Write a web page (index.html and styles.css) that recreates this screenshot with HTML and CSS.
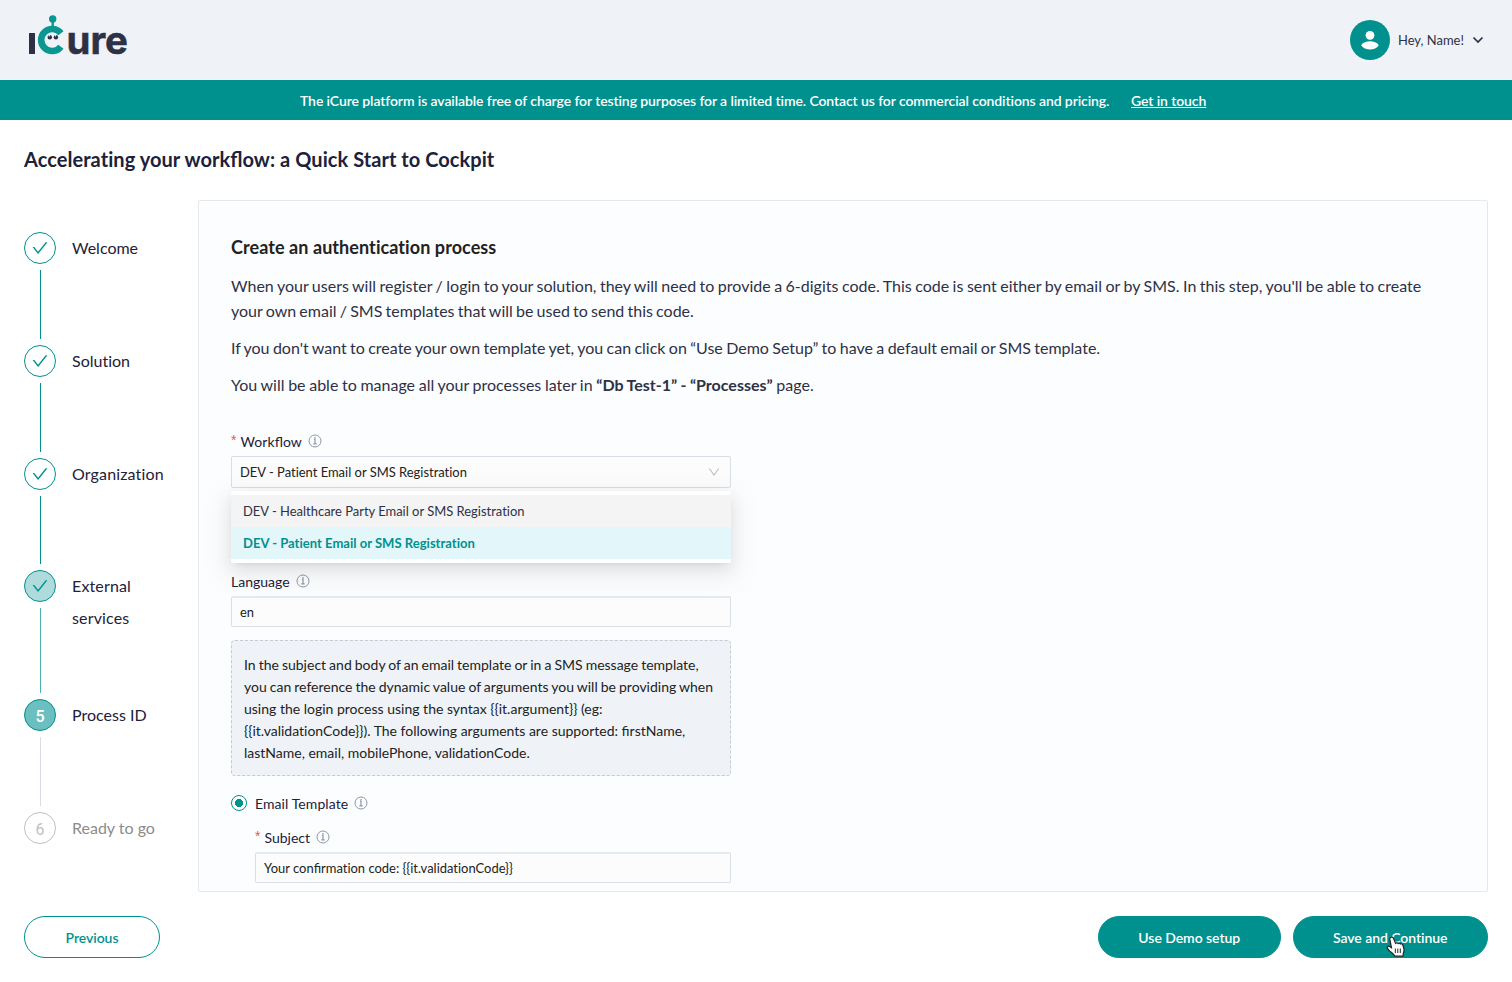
FILE: index.html
```html
<!DOCTYPE html>
<html lang="en">
<head>
<meta charset="utf-8">
<title>iCure Cockpit</title>
<link rel="stylesheet" href="styles.css">
</head>
<body>
<svg class="defs" width="0" height="0">
  <symbol id="check" viewBox="64 64 896 896"><path fill="currentColor" d="M912 190h-69.900c-9.800 0-19.100 4.500-25.100 12.200L404.700 724.500 207 474a32 32 0 0 0-25.100-12.200H112c-6.700 0-10.400 7.700-6.300 12.900l273.900 347c12.800 16.200 37.400 16.200 50.300 0l488.400-618.900c4.100-5.100.4-12.800-6.300-12.800z"/></symbol>
  <symbol id="info" viewBox="0 0 14 14"><circle cx="7" cy="7" r="6" fill="none" stroke="currentColor"/><path d="M7 3v1.200M6 5.200h1v4.500M5.300 9.900h3.400" fill="none" stroke="currentColor" stroke-width="1.200"/></symbol>
</svg>
<header class="header">
  <svg class="logo" width="104" height="44" viewBox="0 0 104 44">
    <rect x="3" y="18" width="6" height="21" fill="#2e3145"/>
    <path d="M34.900 18.300A11 11 0 1 0 34.900 31.700" fill="none" stroke="#0a9691" stroke-width="6.600"/>
    <circle cx="26.700" cy="3.900" r="3.700" fill="#0a9691"/>
    <path d="M26.700 5v9" stroke="#0a9691" stroke-width="2.400"/>
    <circle cx="23.800" cy="22.300" r="2.200" fill="#2e3145"/><circle cx="29.900" cy="22.300" r="2.200" fill="#2e3145"/>
    <circle cx="23.300" cy="20.800" r=".8" fill="#eff3f8"/><circle cx="29.400" cy="20.800" r=".8" fill="#eff3f8"/>
    <text class="logo-text" x="40.500" y="39" textLength="61.500" lengthAdjust="spacingAndGlyphs">ure</text>
  </svg>
  <div class="user">
    <span class="avatar"><svg width="20" height="20" viewBox="0 0 20 20" fill="#fff"><circle cx="10" cy="5.300" r="4.400"/><path d="M1.200 15.200C3 12.200 6.500 11.200 10 11.200s7 1 8.800 4C17 18.200 13.500 19.400 10 19.400s-7-1.200-8.800-4.200z"/></svg></span>
    <span class="hey"><span class="narrow">Hey, Name!</span></span>
    <svg class="chev" width="12" height="8" viewBox="0 0 12 8"><path d="M1.500 1.500 6 6l4.500-4.500" fill="none" stroke="#2e3145" stroke-width="1.700"/></svg>
  </div>
</header>
<div class="banner"><span class="banner-text">The iCure platform is available free of charge for testing purposes for a limited time. Contact us for commercial conditions and pricing.</span><a class="banner-link">Get in touch</a></div>
<h1 class="title">Accelerating your work<span class="lig">fl</span>ow: a Quick Start to Cockpit</h1>
<main class="main">
  <ol class="steps">
    <li class="step"><div class="rail"><span class="dot"><svg width="16" height="16"><use href="#check"/></svg></span><i class="line"></i></div><span class="name">Welcome</span></li>
    <li class="step"><div class="rail"><span class="dot"><svg width="16" height="16"><use href="#check"/></svg></span><i class="line"></i></div><span class="name">Solution</span></li>
    <li class="step third"><div class="rail"><span class="dot"><svg width="16" height="16"><use href="#check"/></svg></span><i class="line"></i></div><span class="name">Organization</span></li>
    <li class="step tall"><div class="rail"><span class="dot light"><svg width="16" height="16"><use href="#check"/></svg></span><i class="line soft"></i></div><span class="name">External<br>services</span></li>
    <li class="step"><div class="rail"><span class="dot active">5</span><i class="line gray"></i></div><span class="name">Process ID</span></li>
    <li class="step last"><div class="rail"><span class="dot wait">6</span></div><span class="name muted">Ready to go</span></li>
  </ol>
  <section class="panel">
    <h2 class="heading">Create an authentication process</h2>
    <div class="intro">
      <p>When your users will register / login to your solution, they will need to provide a 6-digits code. This code is sent either by email or by SMS. In this step, you'll be able to create<br><span class="tight">your own email / SMS templates that will be used to send this code.</span></p>
      <p class="mid">If you don't want to create your own template yet, you can click on “Use Demo Setup” to have a default email or SMS template.</p>
      <p class="loose">You will be able to manage all your processes later in <b>“Db Test-1” - “Processes”</b> page.</p>
    </div>
    <div class="form">
      <div class="label"><em class="req">*</em><span class="wide">Work<span class="lig">fl</span>ow</span><svg class="info" width="14" height="14"><use href="#info"/></svg></div>
      <div class="field select"><span class="narrow">DEV - Patient Email or SMS Registration</span>
        <svg width="12" height="12" viewBox="0 0 12 12"><path d="M1.300 2.500 6 9l4.700-6.500" fill="none" stroke="#bfbfbf" stroke-width="1.100"/></svg>
        <div class="menu">
          <div class="option hover"><span class="narrow">DEV - Healthcare Party Email or SMS Registration</span></div>
          <div class="option selected"><span class="narrow">DEV - Patient Email or SMS Registration</span></div>
        </div>
      </div>
      <div class="label language"><span>Language</span><svg class="info" width="14" height="14"><use href="#info"/></svg></div>
      <div class="field input"><span class="narrow">en</span></div>
      <div class="note"><span class="note-tight">In the subject and body of an email template or in a SMS message template,<br>you can reference the dynamic value of arguments you will be providing when</span><br>using the login process using the syntax {{it.argument}} (eg:<br>{{it.validationCode}}). The following arguments are supported: <span class="lig">fi</span>rstName,<br>lastName, email, mobilePhone, validationCode.</div>
      <div class="label email"><span class="radio"></span><span class="wide">Email Template</span><svg class="info" width="14" height="14"><use href="#info"/></svg></div>
      <div class="nested">
        <div class="label subject"><em class="req">*</em><span>Subject</span><svg class="info" width="14" height="14"><use href="#info"/></svg></div>
        <div class="field input"><span class="narrow">Your con<span class="lig">fi</span>rmation code: {{it.validationCode}}</span></div>
      </div>
    </div>
  </section>
</main>
<footer class="footer">
  <button class="btn outline">Previous</button>
  <div class="actions"><button class="btn demo">Use Demo setup</button><button class="btn save">Save and Continue</button></div>
</footer>
<svg class="cursor" width="20" height="22" viewBox="0 0 20 22"><path d="M5.200 1.200c1-.4 1.900.1 2.300 1.100l2 5c.7-.7 1.900-.7 2.500.2.700-.6 1.900-.5 2.400.4 1-.4 2 .1 2.400 1.100l1 3.300c.5 2 .2 3.500-.5 5l-.3 2.900H8.800c-.8-2-3.100-3.500-5-5.100-1.200-1-2-2.200-2.600-3.200-.4-1.300 1-2.100 2.300-1.400l2 1.200L3.900 3.600c-.4-1 .1-2 1.300-2.400z" fill="#fff" stroke="#222" stroke-width="1.200"/><path d="M9.300 12.500v4.500M11.800 12.500v4.500M14.300 12.500v4.500" stroke="#222" stroke-width="1"/></svg>
</body>
</html>
```
FILE: styles.css
```css
* { box-sizing: border-box; }
body { margin: 0; height: 982px; overflow: hidden; background: #fff; color: #1d2139; font-family: Lato, "Liberation Sans", sans-serif; font-size: 14px; position: relative; font-variant-ligatures: no-common-ligatures; }
.defs { position: absolute; }
.lig { font-variant-ligatures: common-ligatures; letter-spacing: 0; }
.narrow { display: inline-block; transform: scaleX(.925); transform-origin: left center; }
.header { height: 80px; background: #eff3f8; display: flex; justify-content: space-between; align-items: flex-start; padding: 15px 28px 0 26px; }
.logo { display: block; overflow: visible; }
.logo-text { font: 700 38px Inter, sans-serif; fill: #2e3145; stroke: #2e3145; stroke-width: .5px; }
.user { display: flex; align-items: center; margin-top: 5px; height: 40px; color: #2e3145; }
.avatar { width: 40px; height: 40px; border-radius: 50%; background: #00918f; display: grid; place-items: center; margin-right: 8px; }
.hey { width: 66px; white-space: nowrap; padding-bottom: 1px; }
.chev { margin-left: 8px; }
.banner { height: 40px; background: #00918f; color: #fff; display: flex; padding-left: 300px; line-height: 42px; font-weight: 600; white-space: nowrap; }
.banner-text { width: 831px; letter-spacing: -.095px; }
.banner-link { text-decoration: underline; letter-spacing: -.1px; }
.title { margin: 0; height: 80px; padding-left: 24px; line-height: 78px; font-size: 20px; font-weight: 700; letter-spacing: .058px; }
.main { display: flex; height: 692px; padding: 0 24px; }
.steps { list-style: none; margin: 0; padding: 31.500px 0 0; width: 174px; }
.step { display: flex; gap: 16px; height: 113px; }
.step.third { height: 112.300px; }
.step.tall { height: 129.300px; }
.step.last { height: 32px; }
.rail { display: flex; flex-direction: column; width: 32px; }
.dot { width: 32px; height: 32px; flex: none; border: 1px solid #00918f; border-radius: 50%; display: flex; align-items: center; justify-content: center; color: #00918f; font-size: 16px; line-height: 32px; }
.dot.light { background: #b0dbdc; }
.dot.active { background: #6bbfc0; color: #fff; font-family: Roboto, sans-serif; font-weight: 500; padding-top: 3px; }
.dot.wait { border-color: #bfbfbf; color: #bfbfbf; font-family: Roboto, sans-serif; padding-top: 3px; }
.line { width: 1px; flex: 1; margin: 6px 0 6px 16px; background: #00918f; }
.line.soft { background: #4db2b1; }
.line.gray { background: #d9dce3; }
.name { font-size: 16px; line-height: 32px; white-space: nowrap; }
.third .name, .tall .name { letter-spacing: .15px; }
.muted { color: #8c8c8c; }
.panel { flex: 1; background: #fcfdff; border: 1px solid #e6e8eb; border-radius: 2px; padding: 34px 32px 0; overflow: hidden; }
.heading { margin: 0; font-size: 18px; line-height: 25px; font-weight: 700; color: #222; letter-spacing: .07px; }
.intro { padding-top: 13px; font-size: 16px; line-height: 25px; color: #2e3145; white-space: nowrap; word-spacing: -.61px; }
.tight { word-spacing: -.9px; }
.intro .mid { word-spacing: -.73px; }
.intro .loose { word-spacing: -.45px; }
.intro p { margin: 0 0 12px; }
.form { width: 500px; padding-top: 20px; }
.label { height: 24px; display: flex; align-items: center; white-space: nowrap; padding-top: 1px; }
.wide { letter-spacing: .08px; }
.req { color: #ff4d4f; font: 14px/14px "Liberation Sans", sans-serif; margin: -4px 4px 0 0; }
.info { color: #8d99a8; margin: -2px 0 0 6px; }
.field { height: 32px; border: 1px solid #d9dfe5; border-radius: 2px; background: #fcfcfc; display: flex; align-items: center; padding: 0 8px; white-space: nowrap; color: #222; }
.field > .narrow { margin-top: -2px; }
.select { position: relative; justify-content: space-between; margin-top: 3px; padding-right: 10px; }
.menu { position: absolute; left: -1px; top: 34px; width: 500px; padding: 4px 0; background: #fff; border-radius: 2px; box-shadow: 0 3px 6px -4px rgba(0,0,0,.12), 0 6px 16px rgba(0,0,0,.08), 0 9px 28px 8px rgba(0,0,0,.05); z-index: 2; }
.option { height: 32px; padding: 0 12px; line-height: 32px; color: #2e3145; }
.hover { background: #f4f4f4; }
.selected { background: #e3f7fa; color: #00918f; font-weight: 700; }
.selected .narrow { transform: scaleX(.932); }
.label.language { margin-top: 81px; }
.input { height: 31px; border-top-width: 2px; border-top-color: #e6eaee; margin-top: 3px; }
.note { margin-top: 13px; height: 136px; border: 1px dashed #c5cad5; border-radius: 4px; background: #eff3f8; padding: 13px 12px; line-height: 22px; color: #222; white-space: nowrap; }
.note-tight { word-spacing: -.55px; }
.label.email { margin-top: 15px; }
.radio { width: 16px; height: 16px; margin: -2px 8px 0 0; border: 1px solid #00918f; border-radius: 50%; background: radial-gradient(circle, #00918f 3.800px, #fff 4.300px); }
.nested { padding: 10px 0 0 24px; }
.footer { display: flex; justify-content: space-between; padding: 24px 24px 0; }
.actions { display: flex; gap: 12px; }
.btn { height: 42px; border: 1px solid #00918f; border-radius: 21px; background: #00918f; color: #fff; font: 600 14px/38px Lato, sans-serif; padding: 2px 0 0; letter-spacing: -.05px; }
.outline { width: 136px; background: #fff; color: #00918f; }
.demo { width: 182.500px; }
.save { width: 195.500px; }
.cursor { position: absolute; left: 1386px; top: 936px; }
```
